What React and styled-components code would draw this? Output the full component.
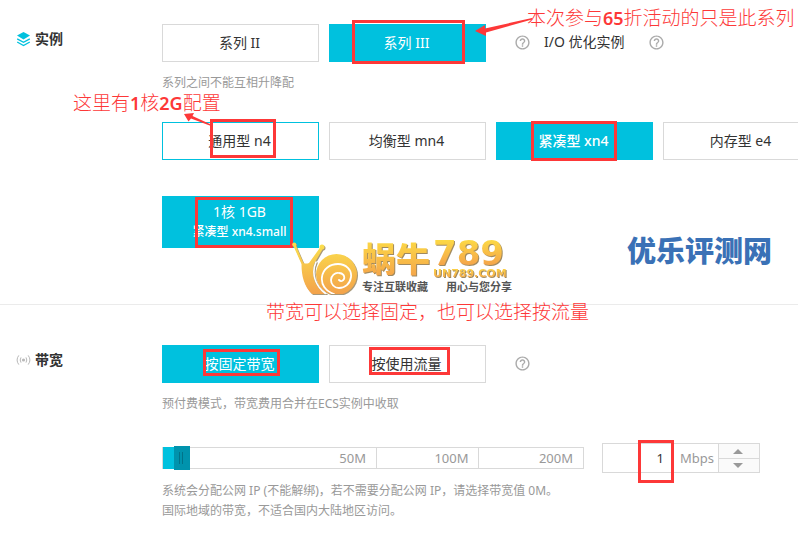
import { useState } from 'react';
import styled, { createGlobalStyle } from 'styled-components';
import { MdHelpOutline } from 'react-icons/md';

const colors = {
   cyan: '#00c1de',
   cyanDark: '#0093ad',
   border: '#d9d9d9',
   text: '#333',
   muted: '#999',
   mark: '#fd3838',
   blue: '#3a71b6',
};

const GlobalStyle = createGlobalStyle`
   * {
      box-sizing: border-box;
   }

   body {
      margin: 0;
      background: #fff;
      color: ${colors.text};
      font: 14px/20px 'Noto Sans', 'Noto Sans CJK SC', sans-serif;
   }

   button, input {
      font: inherit;
      color: inherit;
   }
`;

const Page = styled.main`
   position: relative;
   overflow: hidden;
   padding-bottom: 13px;
`;

const Section = styled.section`
   display: grid;
   grid-template-columns: 146px minmax(0, 1fr);

   padding: ${(p) => p.$padding};
   border-bottom: ${(p) => (p.$divided ? '1px solid #ebebeb' : 'none')};
`;

const SectionTitle = styled.h2`
   display: flex;
   align-items: center;
   gap: 4px;

   height: 30px;
   margin: 0;

   font-size: 14px;
   font-weight: 700;
`;

const OptionRow = styled.div`
   display: flex;
   align-items: center;
   gap: 10px;

   margin-top: ${(p) => p.$top || 0}px;
`;

const Option = styled.button`
   flex: none;

   width: 157px;
   height: ${(p) => (p.$tall ? 52 : 38)}px;
   padding: 0 2px 0 0;

   border: 1px solid
      ${(p) => (p.$selected || p.$active ? colors.cyan : colors.border)};
   background: ${(p) => (p.$selected ? colors.cyan : '#fff')};
   color: ${(p) => (p.$selected ? '#fff' : colors.text)};
   font-weight: ${(p) => (p.$strong ? 500 : 400)};
   cursor: pointer;
`;

const OptionDetail = styled.small`
   display: block;
   font-size: 12px;
   font-weight: 500;
`;

const Extra = styled.div`
   display: flex;
   align-items: center;

   margin-left: 18px;
   padding-bottom: 2px;
`;

const ExtraText = styled.span`
   margin: 0 23px 0 13px;
`;

const HelpIcon = styled(MdHelpOutline)`
   width: 17px;
   height: 17px;
   color: #aaa;
`;

const Hint = styled.p`
   margin: ${(p) => p.$top || 0}px 0 0;

   color: ${colors.muted};
   font-size: 12px;
   line-height: 20px;
`;

const BandwidthRow = styled.div`
   display: flex;
   align-items: center;
   gap: 18px;

   margin-top: 29px;
`;

const SliderBox = styled.div`
   position: relative;
   display: grid;
   grid-template-columns: 215fr 103fr 104fr;

   width: 422px;
   height: 22px;

   border: 1px solid ${colors.border};
`;

const SliderFill = styled.div`
   position: absolute;
   top: -1px;
   bottom: -1px;
   left: 0;

   background: ${colors.cyan};
`;

const SliderMark = styled.span`
   padding-right: 10px;
   border-right: 1px solid ${colors.border};

   color: ${colors.muted};
   font-size: 13px;
   line-height: 20px;
   text-align: right;

   &:last-of-type {
      border-right: none;
   }
`;

const Range = styled.input`
   position: absolute;
   top: -2px;
   right: 0;
   left: 9px;

   width: calc(100% - 9px);
   height: 24px;
   margin: 0;

   appearance: none;
   background: transparent;

   &::-webkit-slider-thumb {
      appearance: none;
      width: 16px;
      height: 24px;

      background:
         linear-gradient(#007389, #007389) 5px 6px / 1px 12px no-repeat,
         linear-gradient(#007389, #007389) 8px 6px / 1px 12px no-repeat,
         ${colors.cyanDark};
   }
`;

const NumberBox = styled.div`
   display: grid;
   grid-template-columns: 66px 1fr 41px;
   align-items: stretch;

   width: 158px;
   height: 30px;

   border: 1px solid ${colors.border};
`;

const NumberInput = styled.input`
   width: 100%;
   padding: 0 5px 0 0;

   border: none;
   outline: none;
   background: transparent;

   font-size: 13px;
   text-align: right;
`;

const Unit = styled.label`
   padding-left: 11px;

   color: ${colors.muted};
   font-size: 13px;
   line-height: 28px;
`;

const Steps = styled.div`
   display: grid;
   grid-template-rows: 1fr 1fr;

   border-left: 1px solid ${colors.border};
`;

const StepButton = styled.button`
   display: flex;
   align-items: center;
   justify-content: center;

   padding: 0 2px 0 0;

   border: none;
   background: #fafafa;
   color: ${colors.muted};

   & + & {
      border-top: 1px solid ${colors.border};
   }
`;

/* Everything below lies on top of the form */

const MarkBox = styled.div`
   position: absolute;
   top: ${(p) => p.$top}px;
   left: ${(p) => p.$left}px;

   width: ${(p) => p.$width}px;
   height: ${(p) => p.$height}px;

   border: 3px solid ${colors.mark};
   pointer-events: none;
`;

const MarkText = styled.p`
   position: absolute;
   top: ${(p) => p.$top}px;
   left: ${(p) => p.$left}px;

   margin: 0;

   color: ${colors.mark};
   font-size: 19px;
   font-weight: 300;
   line-height: 20px;
   white-space: nowrap;
   pointer-events: none;

   b {
      font-size: 18px;
      font-weight: 600;
   }
`;

const Arrows = styled.svg`
   position: absolute;
   top: 0;
   left: 0;
   pointer-events: none;
`;

const Watermark = styled.div`
   position: absolute;
   top: 240px;
   left: 292px;

   display: flex;
   gap: 4px;

   pointer-events: none;
`;

const Brand = styled.div`
   display: grid;
   grid-template-columns: 71px 79px;
   grid-template-rows: 27px 13px 13px;
`;

const Golden = styled.span`
   background: linear-gradient(#fcd945, #f4a04a);
   background-clip: text;
   color: transparent;
   filter: drop-shadow(1px 1px 0 #a08a60);
   white-space: nowrap;
`;

const BrandName = styled(Golden)`
   grid-row: 1 / 3;

   font-size: 34px;
   font-weight: 900;
   line-height: 38px;
`;

const BrandNumber = styled(Golden)`
   font: 700 34px/27px 'DejaVu Sans', sans-serif;
`;

const BrandDomain = styled(Golden)`
   font: 700 11px/13px 'DejaVu Sans', sans-serif;
`;

const Slogan = styled.div`
   grid-column: 1 / 3;

   display: flex;
   justify-content: space-between;

   color: #555;
   font-size: 11px;
   font-weight: 700;
   line-height: 13px;
`;

const SiteName = styled.div`
   position: absolute;
   top: 231px;
   left: 627px;

   color: ${colors.blue};
   font-size: 29px;
   font-weight: 900;
   line-height: 40px;
   pointer-events: none;
`;

const LayersIcon = () => (
   <svg width="15" height="16" viewBox="0 0 15 16" aria-hidden="true">
      <path d="M7.5 1 14 4.6 7.5 8.4 1 4.6z" fill={colors.cyan} />
      <path
         d="M1.2 7.8 7.5 11.3l6.3-3.5M1.2 11 7.5 14.5l6.3-3.5"
         fill="none"
         stroke={colors.cyan}
         strokeWidth="1.4"
      />
   </svg>
);

const SignalIcon = () => (
   <svg
      width="15"
      height="12"
      viewBox="0 0 15 12"
      fill="none"
      stroke="#b8b8b8"
      aria-hidden="true"
   >
      <circle cx="7.5" cy="6" r="1.6" fill="#b8b8b8" stroke="none" />
      <path d="M5 3.4Q3.4 6 5 8.6M10 3.4q1.6 2.6 0 5.2M2.8 1.4Q-.6 6 2.8 10.6M12.2 1.4q3.4 4.6 0 9.2" />
   </svg>
);

const SnailDrawing = styled.svg`
   filter: drop-shadow(1px 1px 0 #a89878);
`;

const Snail = () => (
   <SnailDrawing width="66" height="54" viewBox="0 0 66 54" aria-hidden="true">
      <defs>
         <linearGradient
            id="shell"
            gradientUnits="userSpaceOnUse"
            x1="0"
            y1="4"
            x2="0"
            y2="54"
         >
            <stop offset="0" stopColor="#fbdf4c" />
            <stop offset="1" stopColor="#f3a24b" />
         </linearGradient>
      </defs>
      <g fill="url(#shell)">
         <circle cx="2.2" cy="4.500" r="2" />
         <circle cx="30" cy="7" r="2.500" />
         <path d="M1 5 3.200 4 11.500 23Q14 24 17 23L28.500 7l2.500 1.500L22 24C19 34 22 46 33 54H20C12 46 9.500 36 9.500 24z" />
         <circle cx="44.500" cy="34.500" r="20.500" />
      </g>
      <g fill="none" stroke="#fff" strokeLinecap="round">
         <path d="M24 22C19 33 23 46 34 54" strokeWidth="1.600" />
         <path
            d="M42 54C33 51 29 44 30 37c1-8 8-13 16-13 8 0 14 6 13 13-1 7-6 11-12 11-5 0-8-4-8-8 0-4 4-8 8-7 4 0 6 3 5 6-1 2-3 3-5 1"
            strokeWidth="1.800"
         />
      </g>
   </SnailDrawing>
);

const Triangle = ({ down }) => (
   <svg width="10" height="5" viewBox="0 0 10 5" aria-hidden="true">
      <path d={down ? 'M0 0h10L5 5z' : 'M0 5h10L5 0z'} fill="currentColor" />
   </svg>
);

const specs = [
   { name: '通用型 n4', active: true },
   { name: '均衡型 mn4' },
   { name: '紧凑型 xn4', selected: true },
   { name: '内存型 e4' },
];

const marks = [
   { top: 20, left: 352, width: 113, height: 44 },
   { top: 119, left: 210, width: 66, height: 39 },
   { top: 121, left: 531, width: 86, height: 40 },
   { top: 197, left: 195, width: 98, height: 51 },
   { top: 349, left: 203, width: 77, height: 27 },
   { top: 347, left: 369, width: 81, height: 28 },
   { top: 440, left: 638, width: 36, height: 43 },
];

const MAX = 200;

const BandwidthPicker = () => {
   const [value, setValue] = useState(1);
   const change = (next) => setValue(Math.min(MAX, Math.max(0, Number(next))));

   return (
      <BandwidthRow>
         <SliderBox>
            <SliderFill
               style={{ width: `calc(9px + ${(value / MAX) * 96}%)` }}
            />
            <SliderMark>50M</SliderMark>
            <SliderMark>100M</SliderMark>
            <SliderMark>200M</SliderMark>
            <Range
               type="range"
               aria-label="带宽"
               min="0"
               max={MAX}
               value={value}
               onChange={(e) => change(e.target.value)}
            />
         </SliderBox>
         <NumberBox>
            <NumberInput
               id="mbps"
               inputMode="numeric"
               value={value}
               onChange={(e) => change(e.target.value || 0)}
            />
            <Unit htmlFor="mbps">Mbps</Unit>
            <Steps>
               <StepButton aria-label="+" onClick={() => change(value + 1)}>
                  <Triangle />
               </StepButton>
               <StepButton aria-label="-" onClick={() => change(value - 1)}>
                  <Triangle down />
               </StepButton>
            </Steps>
         </NumberBox>
      </BandwidthRow>
   );
};

const App = () => {
   return (
      <Page>
         <GlobalStyle />
         <Section $padding="24px 0 56px 16px" $divided>
            <SectionTitle>
               <LayersIcon />
               实例
            </SectionTitle>
            <div>
               <OptionRow>
                  <Option>系列 II</Option>
                  <Option $selected>系列 III</Option>
                  <Extra>
                     <HelpIcon />
                     <ExtraText>I/O 优化实例</ExtraText>
                     <HelpIcon />
                  </Extra>
               </OptionRow>
               <Hint $top={11}>系列之间不能互相升降配</Hint>
               <OptionRow $top={29}>
                  {specs.map((spec) => (
                     <Option
                        key={spec.name}
                        $active={spec.active}
                        $selected={spec.selected}
                        $strong={spec.selected}
                     >
                        {spec.name}
                     </Option>
                  ))}
               </OptionRow>
               <OptionRow $top={36}>
                  <Option $selected $tall>
                     1核 1GB
                     <OptionDetail>紧凑型 xn4.small</OptionDetail>
                  </Option>
               </OptionRow>
            </div>
         </Section>

         <Section $padding="40px 0 0 16px">
            <SectionTitle>
               <SignalIcon />
               带宽
            </SectionTitle>
            <div>
               <OptionRow>
                  <Option $selected>按固定带宽</Option>
                  <Option>按使用流量</Option>
                  <Extra>
                     <HelpIcon />
                  </Extra>
               </OptionRow>
               <Hint $top={11}>预付费模式，带宽费用合并在ECS实例中收取</Hint>
               <BandwidthPicker />
               <Hint $top={8}>
                  系统会分配公网 IP (不能解绑)，若不需要分配公网 IP，请选择带宽值
                  0M。
               </Hint>
               <Hint>国际地域的带宽，不适合国内大陆地区访问。</Hint>
            </div>
         </Section>

         {marks.map((m) => (
            <MarkBox
               key={`${m.left}-${m.top}`}
               $top={m.top}
               $left={m.left}
               $width={m.width}
               $height={m.height}
            />
         ))}
         <Arrows width="540" height="130" fill={colors.mark} aria-hidden="true">
            <path d="M475 31 485 25v3.500L532 18v1.500L486 32.500V36z" />
            <path d="M184 114 194 113l-1.500 3L211 124.500v1.500L191 118.500l-2.500 3z" />
         </Arrows>
         <MarkText $top={8} $left={527}>
            本次参与<b>65</b>折活动的只是此系列
         </MarkText>
         <MarkText $top={93} $left={73}>
            这里有<b>1</b>核<b>2G</b>配置
         </MarkText>
         <MarkText $top={302} $left={266}>
            带宽可以选择固定，也可以选择按流量
         </MarkText>

         <Watermark>
            <Snail />
            <Brand>
               <BrandName>蜗牛</BrandName>
               <BrandNumber>789</BrandNumber>
               <BrandDomain>UN789.COM</BrandDomain>
               <Slogan>
                  <span>专注互联收藏</span>
                  <span>用心与您分享</span>
               </Slogan>
            </Brand>
         </Watermark>
         <SiteName>优乐评测网</SiteName>
      </Page>
   );
};

export default App;
